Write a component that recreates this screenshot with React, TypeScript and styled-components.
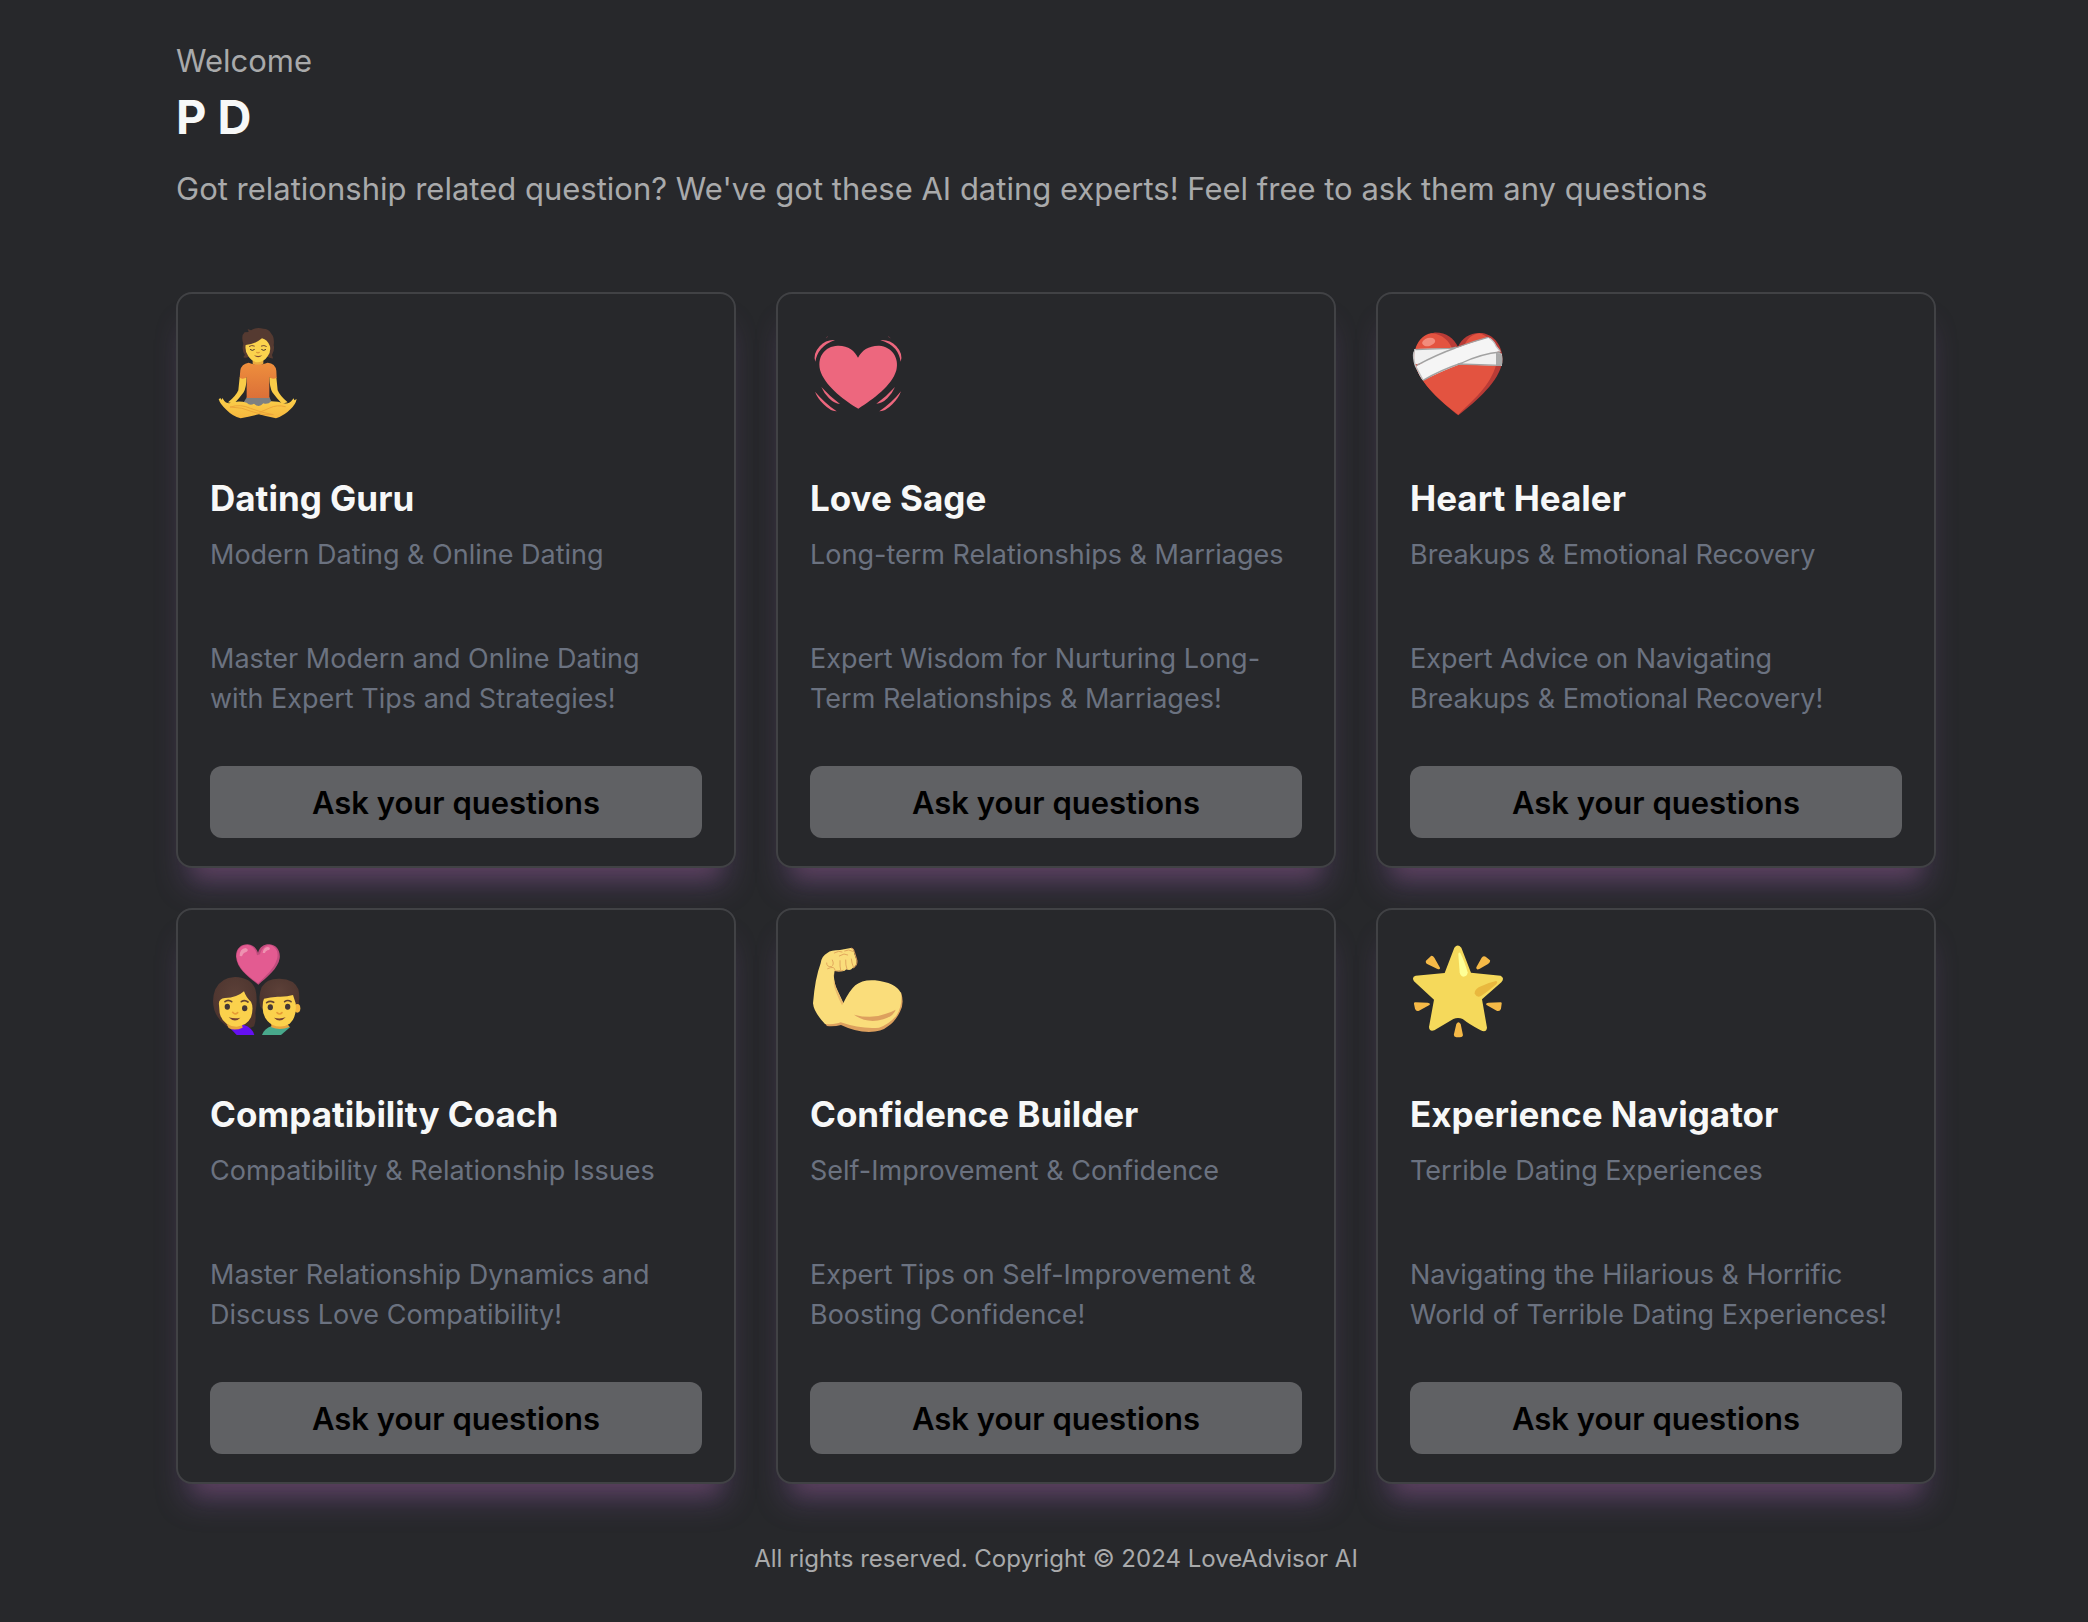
import React from 'react';
import styled, { createGlobalStyle } from 'styled-components';

const GlobalStyle = createGlobalStyle`
  *, *::before, *::after { box-sizing: border-box; }
  body {
    margin: 0;
    background: #27282b;
    color: #a9aaab;
    font-family: Inter, "Liberation Sans", sans-serif;
  }
  h1, h2, p { margin: 0; }
`;

const Page = styled.div`
  min-height: 100vh;
  padding: 41px 152px 48px 176px;
`;

const Header = styled.header`
  margin-bottom: 83px;
  font-size: 31px;
  line-height: 40px;
`;

const UserName = styled.h1`
  margin-bottom: 16px;
  color: #f7f8f8;
  font-size: 47px;
  line-height: 72px;
  font-weight: 700;
`;

const Grid = styled.main`
  display: grid;
  grid-template-columns: repeat(3, minmax(0, 1fr));
  gap: 40px;
`;

const Card = styled.article`
  display: flex;
  flex-direction: column;
  padding: 30px 32px 28px;
  border: 2px solid #414245;
  border-radius: 16px;
  background: #27282b;
  box-shadow:
    0 28px 18px -20px rgba(150, 85, 112, 0.22),
    0 26px 30px -10px rgba(134, 90, 168, 0.4);
`;

const Icon = styled.svg`
  display: block;
  width: 96px;
  height: 96px;
  margin-bottom: 54px;
  overflow: visible;
`;

const Title = styled.h2`
  margin-bottom: 13px;
  color: #f7f8f8;
  font-size: 35px;
  line-height: 48px;
  font-weight: 700;
`;

const CardText = styled.p`
  color: #6b7280;
  font-size: 27px;
  line-height: 40px;
`;

const Specialty = styled(CardText)`
  margin-bottom: 64px;
`;

const Description = styled(CardText)`
  margin-bottom: 47px;
  padding-right: 8px;
`;

const AskButton = styled.button`
  width: 100%;
  height: 72px;
  margin-top: auto;
  padding: 2px 0 0;
  border: 0;
  border-radius: 12px;
  background: #606164;
  color: #000;
  font-family: inherit;
  font-size: 31px;
  line-height: 40px;
  font-weight: 600;
  cursor: pointer;
`;

const Footer = styled.footer`
  margin-top: 59px;
  font-size: 24px;
  line-height: 32px;
  text-align: center;
`;

const LotusIcon = () => (
  <Icon viewBox="30 27 288 288" aria-hidden="true">
    <defs>
      <linearGradient id="shirt" x1="0" y1="0" x2="0" y2="1">
        <stop offset="0" stopColor="#ee8f3d" />
        <stop offset="1" stopColor="#dc7038" />
      </linearGradient>
      <linearGradient id="legs" x1="0" y1="0" x2="0" y2="1">
        <stop offset="0" stopColor="#fbd04b" />
        <stop offset="1" stopColor="#f6b73e" />
      </linearGradient>
    </defs>
    <path d="M119 187 L140 187 Q139 218 131 232 Q118 250 102 266 L84 262 Q108 243 115 226 Z M229 187 L208 187 Q209 218 217 232 Q230 250 246 266 L263 262 Q240 243 233 226 Z" fill="#f9cc48" />
    <path d="M141 246 L208 246 L218 268 L176 276 L128 266 Z" fill="#7d8081" />
    <path d="M56 252 L62 250 L65 255 L67 249 L73 258 Q77 266 92 264 Q115 255 140 263 Q150 273 162 266 Q177 280 190 265 Q203 270 214 259 Q235 259 252 265 Q270 267 276 256 L281 250 L283 256 L290 252 Q287 268 272 282 Q254 301 228 310 Q201 305 177 298 Q150 304 122 310 Q97 303 79 284 Q60 267 56 252 Z" fill="url(#legs)" />
    <path d="M91 276 Q122 266 151 280 Q188 294 220 299 Q188 302 160 291 Q126 276 91 276 M256 275 Q231 268 209 279 L179 292" fill="none" stroke="#eda63a" strokeWidth="3" strokeLinecap="round" />
    <path d="M158 132 H190 V146 Q174 157 158 146 Z" fill="#eaaa3e" />
    <path d="M146 143 Q174 154 203 143 Q226 145 229 167 L230 188 Q219 195 208 187 L208 249 H140 L140 187 Q129 195 119 188 L121 166 Q124 147 146 143 Z" fill="url(#shirt)" />
    <path d="M130 86 Q122 62 134 52 L146 51 L143 42 L153 46 Q169 35 190 41 Q206 41 214 56 Q224 66 221 91 Q225 104 216 120 L219 130 Q210 131 200 124 L148 124 Q137 132 130 126 L135 120 Q124 106 130 86 Z" fill="#553a31" />
    <path d="M137 90 Q165 88 186 70 Q202 73 210 94 Q213 112 203 124 Q192 141 174 142 Q156 141 145 124 Q134 109 137 90 Z" fill="#fbd34d" />
    <path d="M148 94 Q155 89 163 93 M184 93 Q192 89 199 94" fill="none" stroke="#754c32" strokeWidth="3" strokeLinecap="round" />
    <path d="M151 104 Q157 109 163 104 M185 104 Q191 109 197 104" fill="none" stroke="#46352d" strokeWidth="3" strokeLinecap="round" />
    <path d="M170 112 Q174 115 178 112" fill="none" stroke="#dc9939" strokeWidth="4" strokeLinecap="round" />
    <path d="M162 121 Q174 125 187 121 Q174 133 162 121" fill="#7e492f" />
  </Icon>
);

const BeatingHeartIcon = () => (
  <Icon viewBox="30 12 288 288" aria-hidden="true">
    <g fill="#ed677e">
      <path d="M175 266 C137 244 80 201 63 158 C47 112 75 78 113 77 C144 76 165 93 174 113 C185 91 207 76 238 77 C274 80 299 112 289 151 C276 197 219 238 175 266 Z" />
      <path d="M46 125 Q38 102 59 79 Q78 58 105 60 Q79 69 63 87 Q50 102 46 125 Z" />
      <path d="M302 125 Q310 102 289 79 Q270 58 241 60 Q270 69 286 87 Q298 102 302 125 Z" />
      <path d="M64 201 Q89 229 120 252 Q103 251 87 235 Q72 220 64 201 Z M45 215 Q73 248 110 274 Q93 275 71 253 Q52 234 45 215 Z" />
      <path d="M285 201 Q260 229 229 251 Q246 251 262 235 Q277 220 285 201 Z M303 214 Q276 248 238 274 Q255 275 277 253 Q296 234 303 214 Z" />
    </g>
    <path d="M78 54 L84 49 M264 49 L271 54" stroke="#703b46" strokeWidth="2" />
  </Icon>
);

const MendingHeartIcon = () => (
  <Icon viewBox="30 12 288 288" aria-hidden="true">
    <path d="M175 286 C137 255 73 206 48 143 C33 99 52 47 102 38 C137 36 161 55 174 80 C187 53 211 36 246 39 C291 46 311 91 307 126 C297 184 232 241 175 286 Z" fill="#b93b36" />
    <path d="M175 284 C137 254 73 206 48 143 C33 99 52 47 94 40 C127 42 150 64 158 91 L188 89 C199 54 218 42 238 40 C279 52 300 94 289 133 C269 202 220 238 175 284 Z" fill="#e35340" />
    <ellipse cx="86" cy="66" rx="20" ry="12" transform="rotate(-14 86 66)" fill="#f28c7d" />
    <path d="M43 87 L151 85 L192 80 L291 96 L306 102 L306 138 L174 133 L112 127 L42 133 Z" fill="#f1f1f1" />
    <path d="M288 99 L304 100 Q311 117 305 138 L288 136 Z" fill="#a9aaaa" />
    <path d="M49 137 Q132 103 187 77 L264 52 Q281 60 289 78 L301 94 Q240 103 183 131 Q119 156 69 181 Q54 163 49 137 Z" fill="#f5f5f5" />
    <path d="M46 89 L150 85 Q162 84 169 81 M50 136 Q112 103 166 84 Q218 64 264 52 M69 181 Q120 151 185 129 Q244 101 301 96 M173 132 L303 136" fill="none" stroke="#a2a2a2" strokeWidth="4" />
    <path d="M42 95 Q38 112 46 137 L69 180 M267 54 Q282 62 288 78 L301 95" fill="none" stroke="#bfbfbf" strokeWidth="4" />
  </Icon>
);

const CoupleIcon = () => (
  <Icon viewBox="30 30 288 288" aria-hidden="true">
    <defs>
      <radialGradient id="hair" cx="50%" cy="35%" r="60%">
        <stop offset="0" stopColor="#5c4038" />
        <stop offset="1" stopColor="#4c342e" />
      </radialGradient>
    </defs>
    <path d="M175 164 C147 142 111 117 108 80 C107 54 126 42 143 43 C160 44 170 56 174 68 C180 49 194 42 209 43 C230 45 242 63 239 85 C235 115 200 143 175 164 Z" fill="#c04c7d" />
    <path d="M174 160 C145 138 112 116 110 79 C110 52 130 44 145 45 C160 49 169 62 171 76 L180 73 C186 50 202 44 213 46 C231 53 236 70 231 87 C223 116 196 139 174 160 Z" fill="#e35b91" />
    <path d="M119 78 Q119 56 137 54 Q149 59 139 66 Q130 67 126 79 Z M188 69 Q190 53 203 51 Q214 53 207 60 Q197 61 195 69 Z" fill="#ee92b1" />
    <path d="M43 240 Q34 208 46 178 Q62 143 105 141 Q153 142 166 178 Q174 205 166 250 Q169 274 162 289 Q140 300 100 296 L79 288 Q52 268 43 240 Z" fill="url(#hair)" />
    <path d="M82 286 L110 315 H163 Q157 293 132 285 Z" fill="#6510f3" />
    <path d="M80 283 L126 284 L128 293 Q103 304 86 294 Z" fill="#e8a43c" />
    <path d="M57 225 Q54 206 75 204 Q111 203 132 184 Q139 204 153 215 Q162 232 153 262 Q141 287 110 290 Q68 288 59 249 Z" fill="#fbd14c" />
    <path d="M75 215 Q84 207 95 215 M124 215 Q134 208 144 216" fill="none" stroke="#654432" strokeWidth="5" strokeLinecap="round" />
    <ellipse cx="82" cy="230" rx="8" ry="9" fill="#443735" />
    <ellipse cx="134" cy="235" rx="8" ry="9" fill="#443735" />
    <path d="M98 247 Q105 256 113 248" fill="none" stroke="#e79c35" strokeWidth="5" strokeLinecap="round" />
    <path d="M86 262 Q105 267 121 263 Q105 281 86 262 Z" fill="#754131" />
    <path d="M186 315 Q193 295 215 288 L271 291 L243 315 Z" fill="#48a98c" />
    <path d="M214 280 L260 278 L269 291 Q240 303 214 292 Z" fill="#e8a43c" />
    <path d="M181 230 Q174 200 185 171 Q200 145 239 146 Q283 147 295 178 Q301 199 294 238 L283 245 L189 240 Z" fill="url(#hair)" />
    <ellipse cx="292" cy="235" rx="9" ry="13" fill="#f3b63f" />
    <path d="M192 206 Q210 201 233 200 Q260 201 279 195 L287 220 Q291 263 269 281 Q244 297 216 284 Q186 265 188 229 Q188 214 192 206 Z" fill="#fbd14c" />
    <path d="M200 218 Q210 211 221 217 M254 215 Q263 208 273 215" fill="none" stroke="#654432" strokeWidth="5" strokeLinecap="round" />
    <ellipse cx="211" cy="232" rx="8" ry="9" fill="#443735" />
    <ellipse cx="263" cy="230" rx="8" ry="9" fill="#443735" />
    <path d="M231 248 Q239 256 246 248" fill="none" stroke="#e79c35" strokeWidth="5" strokeLinecap="round" />
    <path d="M222 263 Q240 268 257 262 Q239 281 222 263 Z" fill="#754131" />
  </Icon>
);

const MuscleIcon = () => (
  <Icon viewBox="30 15 288 288" aria-hidden="true">
    <path d="M74 265 L81 273 Q104 275 123 270 Q164 290 207 291 Q245 291 264 274 Q285 261 300 230 Q314 205 303 172 L240 200 L130 230 Z" fill="#dda05e" />
    <path d="M75 267 Q41 231 39 205 Q45 130 62 85 Q64 63 83 53 Q92 46 120 45 L152 39 Q161 39 162 53 L170 77 Q170 94 158 99 Q151 109 139 103 Q132 112 120 107 L104 108 Q98 123 107 154 L130 204 Q148 167 166 151 Q187 133 225 136 Q287 143 303 174 Q309 211 289 242 Q267 268 237 278 Q184 283 122 262 Q108 269 75 267 Z" fill="#fadd7b" />
    <path d="M103 108 Q97 128 111 166 L130 204 L126 211 Q104 168 101 145 Z" fill="#eab96b" />
    <path d="M162 239 Q216 253 255 237 Q275 231 287 224 Q280 244 250 253 Q200 267 162 239 Z" fill="#dda05e" />
    <path d="M103 54 L116 49 L126 51 M118 63 L132 57 L143 60 M134 48 L146 45 L158 49 M80 84 Q79 96 94 95 Q104 89 97 75 M120 77 Q119 95 122 106 M137 75 Q136 90 141 103 M154 72 Q155 84 160 96 M83 101 Q105 91 105 107 Q119 112 130 106" fill="none" stroke="#e2a85d" strokeWidth="3" strokeLinecap="round" />
    <path d="M153 39 Q162 40 163 50 L171 77 Q172 92 160 99" fill="none" stroke="#d89958" strokeWidth="3" />
  </Icon>
);

const GlowingStarIcon = () => (
  <Icon viewBox="30 15 288 288" aria-hidden="true">
    <path d="M163 38 Q173 25 184 38 L213 113 L302 122 Q315 129 304 142 L246 193 L261 278 Q259 294 242 286 Q208 268 188 252 Q174 246 160 252 L103 286 Q88 291 87 276 L102 194 L42 139 Q34 126 47 122 L134 114 Z" fill="#f5d95b" />
    <path d="M175 59 Q175 49 181 54 Q193 77 203 112 Q202 125 190 125 Q181 124 179 112 Z" fill="#feff96" />
    <path d="M224 176 Q223 166 236 157 Q262 143 288 138 Q296 141 287 149 Q264 169 243 183 Q231 189 224 176 Z" fill="#e9b83e" />
    <path d="M78 77 L93 63 Q98 61 103 68 L120 98 Q121 106 111 101 L80 86 Q76 82 78 77 Z M245 68 Q251 61 257 65 L270 76 Q272 82 264 87 L238 102 Q228 106 229 97 Z M46 202 L83 203 Q94 205 87 211 L57 227 Q48 230 45 221 L42 207 Q41 202 46 202 Z M302 202 L265 203 Q254 205 261 211 L290 227 Q300 230 303 221 L305 206 Q306 202 302 202 Z M169 267 Q175 256 182 267 L189 301 Q188 307 180 307 L169 307 Q160 306 162 297 Z" fill="#f5b947" />
  </Icon>
);

const experts = [
  {
    Icon: LotusIcon,
    title: 'Dating Guru',
    specialty: 'Modern Dating & Online Dating',
    description: 'Master Modern and Online Dating with Expert Tips and Strategies!',
  },
  {
    Icon: BeatingHeartIcon,
    title: 'Love Sage',
    specialty: 'Long-term Relationships & Marriages',
    description: 'Expert Wisdom for Nurturing Long-Term Relationships & Marriages!',
  },
  {
    Icon: MendingHeartIcon,
    title: 'Heart Healer',
    specialty: 'Breakups & Emotional Recovery',
    description: 'Expert Advice on Navigating Breakups & Emotional Recovery!',
  },
  {
    Icon: CoupleIcon,
    title: 'Compatibility Coach',
    specialty: 'Compatibility & Relationship Issues',
    description: 'Master Relationship Dynamics and Discuss Love Compatibility!',
  },
  {
    Icon: MuscleIcon,
    title: 'Confidence Builder',
    specialty: 'Self-Improvement & Confidence',
    description: 'Expert Tips on Self-Improvement & Boosting Confidence!',
  },
  {
    Icon: GlowingStarIcon,
    title: 'Experience Navigator',
    specialty: 'Terrible Dating Experiences',
    description: 'Navigating the Hilarious & Horrific World of Terrible Dating Experiences!',
  },
];

export default function App() {
  return (
    <>
      <GlobalStyle />
      <Page>
        <Header>
          <p>Welcome</p>
          <UserName>P D</UserName>
          <p>
            Got relationship related question? We've got these AI dating experts! Feel free to ask
            them any questions
          </p>
        </Header>
        <Grid>
          {experts.map(({ Icon: ExpertIcon, title, specialty, description }) => (
            <Card key={title}>
              <ExpertIcon />
              <Title>{title}</Title>
              <Specialty>{specialty}</Specialty>
              <Description>{description}</Description>
              <AskButton type="button">Ask your questions</AskButton>
            </Card>
          ))}
        </Grid>
        <Footer>All rights reserved. Copyright © 2024 LoveAdvisor AI</Footer>
      </Page>
    </>
  );
}
